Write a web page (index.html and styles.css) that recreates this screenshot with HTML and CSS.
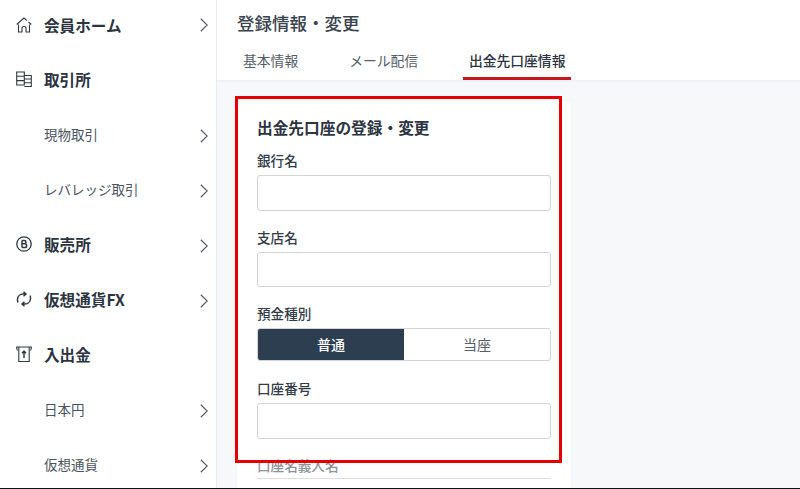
FILE: index.html
```html
<!DOCTYPE html>
<html lang="ja">
<head>
<meta charset="utf-8">
<title>登録情報・変更</title>
<link rel="stylesheet" href="styles.css">
</head>
<body>
<div class="app">
  <nav class="side">
    <a class="nav main"><svg class="ico" viewBox="0 0 16 16"><path d="M.7 7.500 8 1l3 2.600M12.500 5l2.800 2.500M2.500 7.500V15H6v-3.500a2 2 0 0 1 4 0V15h3.500V7.500"/></svg><span class="lbl">会員ホーム</span><svg class="chev" viewBox="0 0 8 14"><path d="M.8.7 7.200 7 .8 13.300"/></svg></a>
    <a class="nav main"><svg class="ico" viewBox="0 0 16 16"><path d="M.7 1h7.600v13H.7zM8.300 4.500h7V15.500h-7M.7 5.300h7.600M.7 9.600h7.600M8.300 8h7M8.300 11.700h7"/></svg><span class="lbl">取引所</span></a>
    <a class="nav sub"><span class="lbl">現物取引</span><svg class="chev" viewBox="0 0 8 14"><path d="M.8.7 7.200 7 .8 13.300"/></svg></a>
    <a class="nav sub"><span class="lbl">レバレッジ取引</span><svg class="chev" viewBox="0 0 8 14"><path d="M.8.7 7.200 7 .8 13.300"/></svg></a>
    <a class="nav main"><svg class="ico" viewBox="0 0 16 16"><circle class="ring" cx="8" cy="8" r="7.200"/><path class="thick" d="M6 4.500v7M6 4.500h2.300a1.600 1.600 0 0 1 0 3.300H6M6 7.800h2.800a1.800 1.800 0 0 1 0 3.700H6"/></svg><span class="lbl">販売所</span><svg class="chev" viewBox="0 0 8 14"><path d="M.8.7 7.200 7 .8 13.300"/></svg></a>
    <a class="nav main"><svg class="ico" viewBox="0 0 16 16"><path class="thick" d="M2 11.500A6 6 0 0 1 1.500 8 5.500 5.500 0 0 1 7 3h2.500M7.500 .8 10 3 7.500 5.200M14 4.500a6 6 0 0 1 .5 3.500A5.500 5.500 0 0 1 9 13H6.500M8.500 10.800 6 13l2.500 2.200"/></svg><span class="lbl">仮想通貨FX</span><svg class="chev" viewBox="0 0 8 14"><path d="M.8.7 7.200 7 .8 13.300"/></svg></a>
    <a class="nav main"><svg class="ico" viewBox="0 0 16 16"><path d="M.3 1h15.400M.5 1l.8 3.500M15.500 1l-.8 3.500M2.800 1v14.500h10.400V1"/><path class="thick" d="M8 12V5M6 7.200 8 5l2 2.200"/></svg><span class="lbl">入出金</span></a>
    <a class="nav sub"><span class="lbl">日本円</span><svg class="chev" viewBox="0 0 8 14"><path d="M.8.7 7.200 7 .8 13.300"/></svg></a>
    <a class="nav sub"><span class="lbl">仮想通貨</span><svg class="chev" viewBox="0 0 8 14"><path d="M.8.7 7.200 7 .8 13.300"/></svg></a>
  </nav>
  <main class="content">
    <header class="head">
      <h1 class="title">登録情報・変更</h1>
      <div class="tabs">
        <a class="tab">基本情報</a>
        <a class="tab">メール配信</a>
        <a class="tab active">出金先口座情報</a>
      </div>
    </header>
    <section class="body">
      <div class="card">
        <h2 class="card-title">出金先口座の登録・変更</h2>
        <label class="field-label">銀行名</label>
        <div class="input"></div>
        <label class="field-label">支店名</label>
        <div class="input"></div>
        <label class="field-label">預金種別</label>
        <div class="seg"><span class="seg-item on">普通</span><span class="seg-item">当座</span></div>
        <label class="field-label">口座番号</label>
        <div class="input"></div>
        <label class="field-label muted">口座名義人名</label>
        <div class="input flat"></div>
      </div>
      <div class="mark"></div>
    </section>
  </main>
</div>
<div class="baseline"></div>
</body>
</html>
```
FILE: styles.css
```css
* { box-sizing: border-box; }
html, body { margin: 0; height: 100%; overflow: hidden; }
body { position: relative; background: #fff; font-family: "Noto Sans CJK JP", "Noto Sans", sans-serif; color: #2b3440; }
.app { display: flex; height: 489px; }
.side { width: 217px; flex: none; border-right: 1px solid #e9ebee; overflow: hidden; }
.nav { display: flex; align-items: center; height: 55px; padding: 0 8px 3px 16px; }
.nav:first-child { height: 53px; }
.ico { width: 16px; height: 16px; flex: none; margin-right: 12px; fill: none; stroke: #2f3843; stroke-width: 1.100; }
.ico .thick { stroke-width: 1.500; }
.ico .ring { stroke-width: 1.300; }
.lbl { flex: 1; white-space: nowrap; }
.main .lbl { font-size: 15.600px; font-weight: 700; color: #2b3440; }
.sub { padding-left: 44px; }
.sub .lbl { font-size: 13.500px; color: #4a5460; }
.chev { width: 8px; height: 14px; flex: none; margin-top: 3px; fill: none; stroke: #555d68; stroke-width: 1.200; }
.nav:first-child .chev { margin-top: 0; }
.content { flex: 1; display: flex; flex-direction: column; min-width: 0; }
.head { height: 82px; flex: none; border-bottom: 2px solid #f1f3f6; padding: 11px 0 0 20px; }
.title { margin: 0; font-size: 17.500px; line-height: 23px; font-weight: 500; color: #3a434e; }
.tabs { display: flex; gap: 39px; margin-top: 7px; }
.tab { height: 39px; padding: 9px 6px 0; font-size: 13.800px; line-height: 20px; color: #555e69; white-space: nowrap; }
.tab.active { width: 108px; padding: 9px 0 0; text-align: center; font-weight: 500; color: #2b3440; border-bottom: 3px solid #c8161d; }
.body { position: relative; flex: 1; background: #f7f8fa; padding: 19px 0 0 20px; overflow: hidden; }
.card { width: 334px; height: 420px; background: #fff; border-radius: 4px; padding: 16px 20px; box-shadow: 0 1px 3px rgba(0,0,0,.05); }
.card-title { margin: 0 0 12px; font-size: 15.700px; line-height: 22px; font-weight: 700; color: #2b3440; }
.field-label { display: block; font-size: 13.600px; line-height: 18px; font-weight: 500; color: #333b46; margin-bottom: 6px; }
.muted { color: #8d9299; margin-bottom: 4px; }
.input { height: 35.500px; border: 1px solid #d2d4d7; border-radius: 3px; background: #fff; margin-bottom: 17px; }
.input.flat { height: 1px; border: 0; border-top: 1px solid #dcdee1; border-radius: 0; }
.seg { display: flex; height: 33px; border: 1px solid #d2d4d7; border-radius: 3px; margin-bottom: 18px; overflow: hidden; }
.seg-item { flex: 1; text-align: center; font-size: 14px; line-height: 31px; color: #555e69; }
.seg-item.on { background: #2c3e50; color: #fff; font-weight: 500; }
.mark { position: absolute; left: 18px; top: 14px; width: 327px; height: 367px; border: 3px solid #e60000; pointer-events: none; }
.baseline { position: absolute; left: 0; right: 0; bottom: 0; height: 1px; background: #111; }
```
